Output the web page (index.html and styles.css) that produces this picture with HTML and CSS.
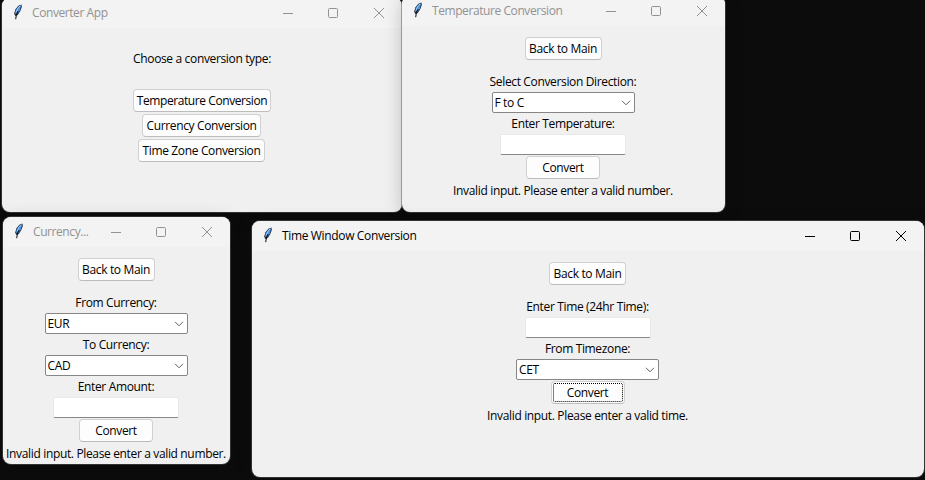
FILE: index.html
```html
<!DOCTYPE html>
<html lang="en">
<head>
<meta charset="utf-8">
<title>Converter App</title>
<link rel="stylesheet" href="styles.css">
</head>
<body>
<svg class="defs" width="0" height="0">
  <symbol id="feather" viewBox="0 0 10 16">
    <path d="M8.5 .5 5.3 1.8 2.5 5.3 1.2 9.5 2.2 12 4.8 11 7.3 7 8.8 3Z" fill="#1d3048"/>
    <path d="M8.1 1.2 5.4 2.6 2.8 6.1 1.9 9.8 4.1 9.9 6.9 6.5Z" fill="#4c90dc"/>
    <path d="M7.2 1.8 4.7 4.8 3.3 8" fill="none" stroke="#a3cbf5" stroke-width="1"/>
    <path d="M5.2 7 3.5 10 2.7 15.2" fill="none" stroke="#080b12" stroke-width="1"/>
  </symbol>
  <symbol id="min" viewBox="0 0 12 12"><path d="M1 6.5H11" /></symbol>
  <symbol id="max" viewBox="0 0 12 12"><rect x="1.5" y="1.5" width="9" height="9" rx="1"/></symbol>
  <symbol id="close" viewBox="0 0 12 12"><path d="M1 1 11 11M11 1 1 11"/></symbol>
  <symbol id="chevron" viewBox="0 0 10 6"><path d="M1 .8 5 4.8 9 .8"/></symbol>
</svg>

<main class="desktop">
  <section class="window main-window">
    <header class="titlebar">
      <svg class="feather"><use href="#feather"/></svg><span class="title">Converter App</span>
      <div class="controls"><svg><use href="#min"/></svg><svg><use href="#max"/></svg><svg><use href="#close"/></svg></div>
    </header>
    <div class="content">
      <p class="label prompt">Choose a conversion type:</p>
      <button class="btn wide-temp">Temperature Conversion</button>
      <button class="btn wide-cur">Currency Conversion</button>
      <button class="btn wide-zone">Time Zone Conversion</button>
    </div>
  </section>

  <section class="window temperature">
    <header class="titlebar">
      <svg class="feather"><use href="#feather"/></svg><span class="title">Temperature Conversion</span>
      <div class="controls"><svg><use href="#min"/></svg><svg><use href="#max"/></svg><svg><use href="#close"/></svg></div>
    </header>
    <div class="content">
      <button class="btn back">Back to Main</button>
      <p class="label">Select Conversion Direction:</p>
      <div class="combo"><span>F to C</span><svg><use href="#chevron"/></svg></div>
      <p class="label">Enter Temperature:</p>
      <div class="entry"></div>
      <button class="btn convert">Convert</button>
      <p class="label message">Invalid input. Please enter a valid number.</p>
    </div>
  </section>

  <section class="window currency">
    <header class="titlebar">
      <svg class="feather"><use href="#feather"/></svg><span class="title">Currency...</span>
      <div class="controls"><svg><use href="#min"/></svg><svg><use href="#max"/></svg><svg><use href="#close"/></svg></div>
    </header>
    <div class="content">
      <button class="btn back">Back to Main</button>
      <p class="label">From Currency:</p>
      <div class="combo"><span>EUR</span><svg><use href="#chevron"/></svg></div>
      <p class="label">To Currency:</p>
      <div class="combo"><span>CAD</span><svg><use href="#chevron"/></svg></div>
      <p class="label">Enter Amount:</p>
      <div class="entry"></div>
      <button class="btn convert">Convert</button>
      <p class="label message">Invalid input. Please enter a valid number.</p>
    </div>
  </section>

  <section class="window timezone active">
    <header class="titlebar">
      <svg class="feather"><use href="#feather"/></svg><span class="title">Time Window Conversion</span>
      <div class="controls"><svg><use href="#min"/></svg><svg><use href="#max"/></svg><svg><use href="#close"/></svg></div>
    </header>
    <div class="content">
      <button class="btn back">Back to Main</button>
      <p class="label">Enter Time (24hr Time):</p>
      <div class="entry"></div>
      <p class="label">From Timezone:</p>
      <div class="combo"><span>CET</span><svg><use href="#chevron"/></svg></div>
      <button class="btn convert focused">Convert</button>
      <p class="label message">Invalid input. Please enter a valid time.</p>
    </div>
  </section>
</main>
</body>
</html>
```
FILE: styles.css
```css
* { box-sizing: border-box; }
body {
  margin: 0;
  background: #0c0c0c;
  font: 12px/16px "Open Sans", "Noto Sans", sans-serif;
  letter-spacing: -0.35px;
  color: #000;
}
.defs { position: absolute; }
.desktop { position: relative; width: 925px; height: 480px; overflow: hidden; }
.window {
  position: absolute;
  border-radius: 8px;
  background: #f0f0f0;
  overflow: hidden;
  box-shadow: 0 0 0 1px rgba(90, 90, 90, .5), 0 3px 18px rgba(0, 0, 0, .22);
}
.main-window { left: 2px; top: -2px; width: 400px; height: 214px; }
.temperature { left: 402px; top: -4px; width: 323px; height: 216px; }
.currency { left: 3px; top: 217px; width: 227px; height: 247px; }
.timezone { left: 252px; top: 221px; width: 672px; height: 256px; }

.titlebar {
  display: flex;
  align-items: center;
  height: 30px;
  padding-left: 11px;
  background: #f3f3f3;
  color: #929292;
}
.active .titlebar { color: #000; }
.feather { width: 10px; height: 16px; margin-top: -2px; }
.title { margin-left: 9px; white-space: nowrap; }
.inactive .title, .title { letter-spacing: -0.42px; }
.active .title { letter-spacing: -0.35px; }
.controls { display: flex; gap: 34px; margin-left: auto; padding-right: 17px; }
.controls svg { width: 12px; height: 12px; fill: none; stroke: currentColor; stroke-width: 1; }
.controls svg:first-child { margin-right: -1px; }

.content { display: flex; flex-direction: column; align-items: center; }
.temperature .content, .timezone .content, .currency .content { padding-right: 1px; }
.label { margin: 0; height: 21px; line-height: 21px; white-space: nowrap; }
.prompt { margin: 20px 0 19px; }
.btn {
  display: flex;
  align-items: center;
  justify-content: center;
  height: 23px;
  margin: 1px 0;
  padding: 0;
  border: 1px solid #d0d0d0;
  border-bottom-color: #bcbcbc;
  border-radius: 4px;
  background: #fdfdfd;
  color: #000;
  font: inherit;
  letter-spacing: inherit;
  white-space: nowrap;
}
.wide-temp { width: 138px; letter-spacing: -0.42px; }
.wide-cur { width: 119px; margin-right: 1px; }
.wide-zone { width: 127px; margin-right: 1px; }
.back { width: 77px; margin: 11px 0; }
.convert { width: 74px; }
.focused { outline: 1px dotted #000; outline-offset: -3px; }
.combo {
  display: flex;
  align-items: center;
  justify-content: space-between;
  width: 143px;
  height: 21px;
  padding: 0 3px 0 2px;
  border: 1px solid #868686;
  border-radius: 2px;
  background: #fff;
}
.combo svg { width: 10px; height: 6px; fill: none; stroke: #606060; stroke-width: 1; }
.entry {
  width: 126px;
  height: 21px;
  border: 1px solid #e9e9e9;
  border-bottom-color: #868686;
  border-radius: 2px;
  background: #fff;
}
```
